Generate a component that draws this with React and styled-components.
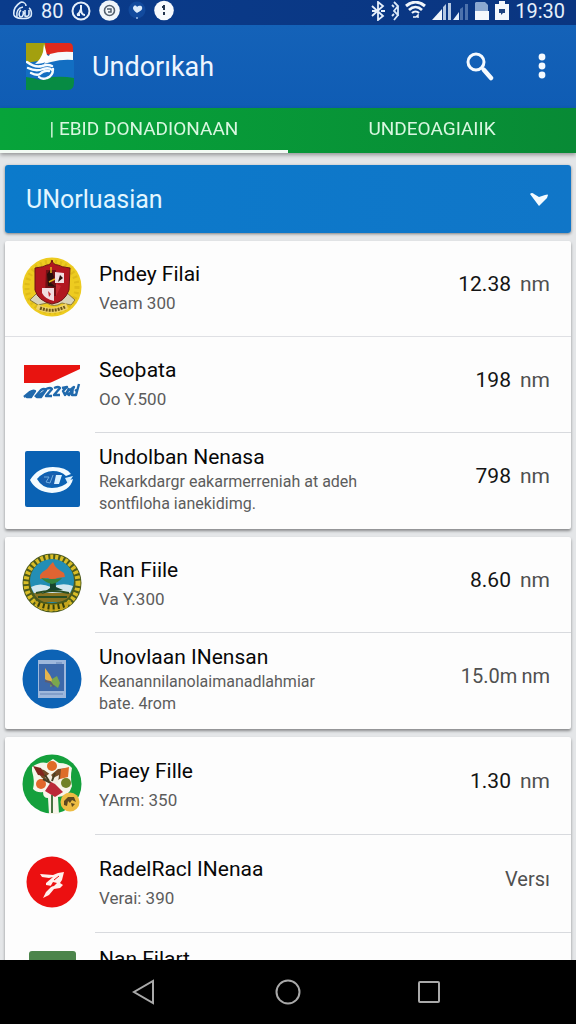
import React from "react";
import styled, { createGlobalStyle } from "styled-components";

const GlobalStyle = createGlobalStyle`
  *, *::before, *::after { box-sizing: border-box; }
  body { margin: 0; background: #e4e6e8; font-family: Roboto, "Noto Sans", sans-serif; }
  button, select { font: inherit; color: inherit; border: 0; margin: 0; padding: 0; background: none; }
`;

const Screen = styled.div`
  display: flex;
  flex-direction: column;
  height: 100vh;
  overflow: hidden;
`;

const StatusBar = styled.div`
  display: flex;
  flex: none;
  align-items: center;
  justify-content: space-between;
  height: 25px;
  padding: 0 11px 4px 12px;
  background: linear-gradient(90deg, #0a3c8c, #0a3580);
  color: #e6f0fb;
  font-size: 20px;
  line-height: 20px;
`;

const StatusGroup = styled.div`
  display: flex;
  align-items: center;
  gap: ${(p) => p.$gap}px;
  svg { display: block; }
`;

const AppBar = styled.header`
  display: flex;
  flex: none;
  align-items: center;
  height: 83px;
  padding: 0 24px 0 26px;
  background: linear-gradient(#1462b8, #0f5cb4);
  color: #eef6ff;
`;

const AppTitle = styled.h1`
  flex: 1;
  margin: 0 0 0 18px;
  font-size: 27px;
  font-weight: 400;
  line-height: 36px;
`;

const AppActions = styled.div`
  display: flex;
  gap: 28px;
`;

const IconButton = styled.button`
  display: flex;
  align-items: center;
  justify-content: center;
  width: ${(p) => p.$width}px;
  height: 48px;
  cursor: pointer;
`;

const Tabs = styled.div`
  position: relative;
  z-index: 1;
  display: flex;
  flex: none;
  height: 45px;
  background: linear-gradient(90deg, #07a43a, #088a35);
  box-shadow: 0 2px 4px rgba(0, 0, 0, 0.35);
`;

const Tab = styled.button`
  flex: 1;
  border-bottom: 3px solid ${(p) => (p["aria-selected"] ? "#f2faf4" : "transparent")};
  color: #d9f7e0;
  font-size: 19px;
  line-height: 24px;
  cursor: pointer;
`;

const Content = styled.main`
  display: flex;
  flex: 1;
  flex-direction: column;
  gap: 8px;
  min-height: 0;
  padding: 12px 5px 0;
  overflow-y: auto;
  scrollbar-width: none;
  background: #e4e6e8;
`;

const Picker = styled.div`
  position: relative;
  flex: none;
  height: 68px;
  border-radius: 3px;
  background: linear-gradient(90deg, #0b7acb, #1076c8);
  box-shadow: 0 1px 3px rgba(0, 0, 0, 0.45);
  color: #e2f6ff;

  select {
    width: 100%;
    height: 100%;
    padding: 0 60px 0 21px;
    appearance: none;
    font-size: 25px;
    cursor: pointer;
  }
  option { color: #111; }
  svg {
    position: absolute;
    top: 26px;
    right: 22px;
    pointer-events: none;
  }
`;

const Card = styled.ul`
  flex: none;
  margin: 0;
  padding: 0;
  list-style: none;
  border-radius: 2px;
  background: #fdfdfd;
  box-shadow: 0 2px 3px rgba(0, 0, 0, 0.4);
`;

const Row = styled.li`
  display: flex;
  min-height: ${(p) => (p.$tall ? 98 : 96)}px;
  border-bottom: ${(p) => (p.$wideLine ? "1px solid #dfe0e4" : "0")};
`;

const LogoCell = styled.div`
  display: flex;
  flex: none;
  align-items: ${(p) => (p.$top ? "flex-start" : "center")};
  justify-content: center;
  width: 90px;
  padding: ${(p) => (p.$top ? "18px 0 0 4px" : "0 0 4px 4px")};
  svg { display: block; }
`;

const RowBody = styled.div`
  display: flex;
  flex: 1;
  align-items: ${(p) => (p.$top ? "flex-start" : "center")};
  justify-content: space-between;
  min-width: 0;
  padding: ${(p) => (p.$top ? "12px 21px 0 4px" : "0 21px 4px 4px")};
  border-bottom: ${(p) => (p.$line ? "1px solid #d8dade" : "0")};
`;

const RowTitle = styled.h2`
  margin: 0;
  color: #080808;
  font-size: 21px;
  font-weight: 400;
  line-height: 28px;
`;

const RowNote = styled.p`
  margin: ${(p) => (p.$long ? 0 : 4)}px 0 0;
  color: #5c5c5c;
  font-size: ${(p) => (p.$long ? 16 : 17)}px;
  line-height: 22px;
  white-space: pre-line;
`;

const Amount = styled.div`
  display: flex;
  flex: none;
  gap: ${(p) => (p.$tight ? 4 : 9)}px;
  padding-bottom: 6px;
  color: ${(p) => (p.$muted ? "#505050" : "#141414")};
  font-size: ${(p) => (p.$muted ? 20 : 21)}px;
  line-height: 28px;
`;

const Unit = styled.span`
  color: #505050;
`;

const NavBar = styled.nav`
  display: flex;
  flex: none;
  align-items: center;
  justify-content: center;
  gap: 93px;
  height: 64px;
  background: #000;
  svg { display: block; }
`;

/* Status bar drawings */

const FlameIcon = () => (
  <svg width="21" height="20" viewBox="0 0 21 20" fill="none" stroke="#dcebfa" strokeWidth="1.6">
    <path d="M9 1C3 5 1 9 2 14c1 4 14 5 17 1 1-3 0-7-2-8M9 1c3 0 5 2 5 4" />
    <path d="M5 16c-1-5 1-9 6-10M9 9c-3 2-2 7 0 7s3-4 2-6M13 9v6c2 1 4 0 4-2V9" />
  </svg>
);

const RingIcon = () => (
  <svg width="20" height="20" viewBox="0 0 20 20" fill="none" stroke="#e6f0fb">
    <circle cx="10" cy="10" r="8.5" strokeWidth="2" />
    <path d="M10 4v7M6 14c2-1 3-3 4-6 0 4 1 6 4 6M6 14h3" strokeWidth="2" />
  </svg>
);

const DiscIcon = () => (
  <svg width="21" height="21" viewBox="0 0 21 21">
    <circle cx="10.500" cy="10.500" r="10.300" fill="#f1f6fb" />
    <circle cx="10.500" cy="10.500" r="5" fill="none" stroke="#53606f" strokeWidth="1.600" />
    <path d="M8 9h4v3H9" fill="none" stroke="#53606f" strokeWidth="1.500" />
  </svg>
);

const HeartIcon = () => (
  <svg width="18" height="20" viewBox="0 0 18 20">
    <circle cx="9" cy="9" r="8.500" fill="#124a9d" />
    <path d="M9 12C5 9 4 7 6 5c1-1 3 0 3 1 1-1 4-2 5 0 1 3-2 4-5 6z" fill="#dcebfa" />
    <circle cx="9" cy="17" r="1" fill="#9fbde3" />
  </svg>
);

const AlertDiscIcon = () => (
  <svg width="20" height="21" viewBox="0 0 20 21">
    <circle cx="10" cy="10.500" r="9.800" fill="#f7fafd" />
    <path d="M10 5v5M10 12v3M8 7h2" stroke="#23354f" strokeWidth="2" />
  </svg>
);

const BluetoothIcon = () => (
  <svg width="15" height="20" viewBox="0 0 15 20" fill="none" stroke="#e6f0fb" strokeWidth="1.800">
    <path d="M1 5l11 10-5 4V1l5 4L1 15M1 10h4M10 10h4" />
  </svg>
);

const LinkIcon = () => (
  <svg width="9" height="20" viewBox="0 0 9 20" fill="none" stroke="#dcebfa" strokeWidth="1.800">
    <path d="M3 1l4 4-4 5 4 4-4 5M7 5v10M1 4l2 2M1 15l2-2" />
  </svg>
);

const WifiIcon = () => (
  <svg width="21" height="20" viewBox="0 0 21 20" fill="none" stroke="#f1f6fb">
    <path d="M1 5c6-5 13-5 19 0" strokeWidth="3" />
    <path d="M4 9c4-4 9-4 13 0" strokeWidth="2.600" />
    <path d="M7 12c2-2 5-2 7 0" strokeWidth="2.200" />
    <path d="M8 16h3l2-2v3" strokeWidth="1.500" />
  </svg>
);

const SignalIcons = () => (
  <svg width="38" height="20" viewBox="0 0 38 20">
    <path d="M1 19L11 8v11z" fill="#f1f6fb" />
    <path d="M12 19V6l3-3v16zM17 19V2h3v17z" fill="#b4c8e2" />
    <path d="M22 19l6-8v8z" fill="#e6f0fb" />
    <path d="M29 19V8l3-2v13zM34 19V3h3v16z" fill="#4d72ac" />
  </svg>
);

const CardIcon = () => (
  <svg width="15" height="20" viewBox="0 0 15 20">
    <path d="M2 1h9l3 3v7H1V2z" fill="#8ba8d0" />
    <path d="M1 10h14v9H1z" fill="#f4f8fc" />
  </svg>
);

const BatteryIcon = () => (
  <svg width="16" height="20" viewBox="0 0 16 20">
    <path d="M5 0h6v3h4v16H1V3h4z" fill="#f4f8fc" />
    <path d="M5 8h6v4H9l-2 2v-2H5z" fill="#1e437f" />
  </svg>
);

/* App bar drawings */

const BrandLogo = () => (
  <svg width="48" height="49" viewBox="0 0 48 49" role="img" aria-label="Logo">
    <path d="M0 1h20v19L0 23z" fill="#a3a00e" />
    <path d="M19 1h24q4 0 4 5v5q-12-1-22 2l-5-1z" fill="#e02a1c" />
    <path d="M18 18h30v18H0V21z" fill="#126ec2" />
    <path d="M24 12q10-3 23-2v8q-11-1-22 2l-7 2z" fill="#f6fafa" />
    <path d="M18 2l3 11 4 2-3 4q-5 3-13 3 6-5 8-12z" fill="#fff" />
    <path d="M0 35q8 1 14 3 6 0 12-3 12-1 22 1v4q0 8-6 8H0z" fill="#078b43" />
    <g fill="none" stroke="#f5fbff" strokeWidth="2.4" strokeLinecap="round">
      <path d="M1 20q8 6 15 4 6-2 10 0" />
      <path d="M2 26q8 4 15 1 6-2 9 1" />
      <path d="M5 31q6 3 9 1 4-4 9-3" />
      <path d="M27 27q0 7-6 9-5 2-8-1" />
    </g>
  </svg>
);

const SearchIcon = () => (
  <svg width="28" height="30" viewBox="0 0 28 30" fill="none" stroke="#f5faff">
    <circle cx="10" cy="10" r="8" strokeWidth="3" />
    <path d="M16 16l3 3" strokeWidth="3" />
    <path d="M18 18l7 8" strokeWidth="4.500" strokeLinecap="round" />
  </svg>
);

const MoreIcon = () => (
  <svg width="8" height="28" viewBox="0 0 8 28" fill="#f5faff">
    <circle cx="4" cy="4" r="3.400" />
    <circle cx="4" cy="13" r="3.400" />
    <circle cx="4" cy="22" r="3.400" />
  </svg>
);

const ArrowIcon = () => (
  <svg width="20" height="16" viewBox="0 0 20 16" aria-hidden="true">
    <path d="M1 3q2-2 4 0l5 3 6-2q3-1 3 0l-1 3-8 8z" fill="#f3fbff" />
  </svg>
);

/* Row logos */

const ShieldLogo = () => (
  <svg width="60" height="60" viewBox="0 0 60 60">
    <circle cx="30" cy="30" r="29.500" fill="#edcb20" />
    <circle cx="30" cy="30" r="25" fill="none" stroke="#dfbb18" strokeWidth="5" strokeDasharray="2 3" />
    <path d="M8 43l8-8 8 10 12 0 8-10 9 8-4 5-9-2q-8 5-15 0l-9 2z" fill="#d9d4b8" stroke="#8b7a3a" strokeWidth="1" />
    <path d="M13 11q9-1 12-3 4 0 5-5 1 5 6 5 3 2 12 3l-1 22q-4 12-17 14-14-3-17-14z" fill="#b11720" stroke="#6d1514" strokeWidth="1" />
    <path d="M24 13h10v26H23z" fill="#701013" />
    <path d="M33 15l9 1v10h-9zM20 31h12v13q-9-2-12-8z" fill="#f1dde0" />
    <path d="M25 17l4-5 3 8-3 6 5 4-8-1zM38 18l3 3-5 4z" fill="#28100b" />
    <path d="M26 34l3 3-2 3zM34 27l5 2-5 10z" fill="#c52b32" />
    <path d="M29 10v6M27 25l6-3" stroke="#e4b11d" strokeWidth="1.500" />
    <path d="M16 47q14 8 28-1l2 6q-17 8-32 0z" fill="#efd36b" />
    <path d="M18 51q12 5 25-1" fill="none" stroke="#6b5618" strokeWidth="3" strokeDasharray="2 1" />
  </svg>
);

const WaveLogo = () => (
  <svg width="58" height="38" viewBox="0 0 58 38">
    <path d="M1 1h56v4L29 18q-2 1-4 1H1z" fill="#e81410" />
    <g fill="none" stroke="#2069ac" strokeWidth="2.400" strokeLinejoin="round">
      <path d="M1 33l6-5q3-2 5-1l-4 6H4l7-5M12 33l6-7q3-2 5 0l-5 7h-4l8-6M23 25q5-2 6 0l-6 7h6M31 24q5-2 6 0l-6 7h6" />
      <path d="M39 24l5-1-4 4 2 4 4-6M46 24q-3 6 0 7l5-8-4 3 3 3M50 23l-1 8h4l3-11M52 27l3-2" />
    </g>
  </svg>
);

const EyeLogo = () => (
  <svg width="55" height="56" viewBox="0 0 55 56">
    <rect width="55" height="56" rx="2" fill="#0a62b4" />
    <path d="M5 29q8-13 23-13 13 0 18 7l-5 2q-5-5-13-5-9 0-16 8 5 9 15 9 11 0 18-8l3-1q-3 13-21 14-16-1-22-13z" fill="#f3fbff" />
    <path d="M16 26q6-5 18-4l-2 12H19q-5-2-3-8z" fill="#175fae" />
    <path d="M19 26h5l-3 5 4 1M28 24l-3 8" fill="none" stroke="#6faee0" strokeWidth="1" />
    <path d="M31 24h6l-3 9h-5z" fill="#d8f0ff" />
    <path d="M40 27l8-2-5 8z" fill="#d8f0ff" />
  </svg>
);

const TreeLogo = () => (
  <svg width="60" height="60" viewBox="0 0 60 60">
    <circle cx="30" cy="30" r="29.500" fill="#4c5a1c" />
    <circle cx="30" cy="30" r="26" fill="none" stroke="#d9bd28" strokeWidth="5" strokeDasharray="3 2" />
    <circle cx="30" cy="28" r="22" fill="#238eb5" />
    <path d="M9 34q9-5 20 0 12-5 22-1l-3 7H12z" fill="#d4e7ef" />
    <path d="M12 40h37q-3 8-13 9H22q-8-3-10-9z" fill="#8b7421" />
    <path d="M28 21h5l1 13 7 3-10 1-12 3 9-6z" fill="#17452c" />
    <path d="M18 22q3-4 7-6l3-4 3-3 2 4q2 3 9 7l1 4-8 1-4 3-5-3-8 1z" fill="#df6432" />
    <path d="M19 25q11 2 21 0-4 5-10 6-6-1-11-6z" fill="#33843d" />
    <path d="M14 40q16-4 33 0M16 44h29" fill="none" stroke="#294d23" strokeWidth="2" />
    <path d="M12 47q18 9 37 0l-4 8q-15 6-29 0z" fill="#c5a51d" />
    <path d="M16 51q14 6 29 0" fill="none" stroke="#36400c" strokeWidth="5" strokeDasharray="2 3" />
  </svg>
);

const PhotoLogo = () => (
  <svg width="60" height="60" viewBox="0 0 60 60">
    <circle cx="30" cy="30" r="29.500" fill="#0d63b5" />
    <rect x="16" y="11" width="28" height="38" fill="#9eb8dc" />
    <rect x="17" y="15" width="25" height="27" fill="#3d69aa" />
    <path d="M18 45h23M34 14h6" stroke="#6686b8" strokeWidth="1" />
    <path d="M23 19l5 7 3 6-3 2-5-4z" fill="#e4b44d" />
    <path d="M30 30l5-3 3 7-2 5-4-3-4 2z" fill="#7ba64d" />
    <path d="M23 32l5 1 4 5" fill="none" stroke="#5c5d73" strokeWidth="2" />
  </svg>
);

const FruitLogo = () => (
  <svg width="60" height="62" viewBox="0 0 60 62">
    <circle cx="30" cy="31" r="29.500" fill="#14a03c" />
    <path d="M10 14q8-6 15-4l6-4 6 4q9 0 13 5-2 9 0 18-3 11-14 11l1 17h-10l-1-16q-5 0-5-6-6 1-10-3 2-8-1-18z" fill="#f7f5ea" />
    <path d="M12 14l10 3 7 5 7-6 10-1-4 8-10 7-12-5z" fill="#744a26" />
    <circle cx="30" cy="13" r="5" fill="#df6b24" />
    <path d="M11 13l8 2 4 8-7-1z" fill="#82251d" />
    <path d="M39 16l8-2-1 10-8 2z" fill="#de6d29" />
    <circle cx="19" cy="31" r="5" fill="#e1672a" />
    <circle cx="44" cy="30" r="5" fill="#718126" />
    <path d="M23 24l5-4 3 5 6-3-1 8-7 3z" fill="#f4eee2" />
    <path d="M23 22l4 6M33 20l-3 8M21 26l8 4" stroke="#463e23" strokeWidth="2" />
    <path d="M23 38l6-9 4 2 8 8-8 5z" fill="#bb2938" />
    <path d="M30 42v18" stroke="#497442" strokeWidth="2" />
    <circle cx="48" cy="49" r="9.500" fill="#edbc43" />
    <path d="M42 48l4-4h6l2 5-4-2-2 3-2-2-1 5-3-1zM49 50l4 1-3 3z" fill="#5c4820" />
  </svg>
);

const RunnerLogo = () => (
  <svg width="52" height="52" viewBox="0 0 52 52">
    <circle cx="26" cy="26" r="25.500" fill="#ec1011" />
    <path d="M14 18l2 3 7 1 4-1-7 6v2l6 1-6 6-3 6 6-3 5-6 6-1 3-3-3-2 2-3 2-8-6 1-5 2z" fill="#fff0ed" />
    <path d="M27 26l4 1-3 3-4 1z" fill="#ec1011" />
    <path d="M28 24l5-4" stroke="#ec1011" strokeWidth="1" />
  </svg>
);

const GreenLogo = () => (
  <svg width="47" height="47" viewBox="0 0 47 47">
    <rect width="47" height="47" rx="3" fill="#4c854b" />
  </svg>
);

const groups = [
  [
    { logo: ShieldLogo, title: "Pndey Filai", note: "Veam 300", value: "12.38", unit: "nm", wideLine: true },
    { logo: WaveLogo, title: "Seoþata", note: "Oo Y.500", value: "198", unit: "nm" },
    {
      logo: EyeLogo,
      title: "Undolban Nenasa",
      note: "Rekarkdargr eakarmerreniah at adeh\nsontfiloha ianekidimg.",
      long: true,
      value: "798",
      unit: "nm",
    },
  ],
  [
    { logo: TreeLogo, title: "Ran Fiile", note: "Va Y.300", value: "8.60", unit: "nm" },
    {
      logo: PhotoLogo,
      title: "Unovlaan INensan",
      note: "Keanannilanolaimanadlahmiar\nbate. 4rom",
      long: true,
      value: "15.0m",
      unit: "nm",
      muted: true,
    },
  ],
  [
    { logo: FruitLogo, title: "Piaey Fille", note: "YArm: 350", value: "1.30", unit: "nm", tall: true },
    { logo: RunnerLogo, title: "RadelRacl INenaa", note: "Verai: 390", value: "Versı", muted: true, tall: true },
    { logo: GreenLogo, title: "Nan Filart", top: true },
  ],
];

const ListRow = ({ item, last }) => {
  const Logo = item.logo;
  return (
    <Row $tall={item.tall} $wideLine={item.wideLine}>
      <LogoCell $top={item.top}>
        <Logo />
      </LogoCell>
      <RowBody $line={!last && !item.wideLine} $top={item.top}>
        <div>
          <RowTitle>{item.title}</RowTitle>
          {item.note && <RowNote $long={item.long}>{item.note}</RowNote>}
        </div>
        {item.value && (
          <Amount $muted={item.muted} $tight={item.muted}>
            <span>{item.value}</span>
            {item.unit && <Unit>{item.unit}</Unit>}
          </Amount>
        )}
      </RowBody>
    </Row>
  );
};

export default function App() {
  return (
    <Screen>
      <GlobalStyle />
      <StatusBar>
        <StatusGroup $gap={8}>
          <FlameIcon />
          <span>80</span>
          <RingIcon />
          <DiscIcon />
          <HeartIcon />
          <AlertDiscIcon />
        </StatusGroup>
        <StatusGroup $gap={5}>
          <BluetoothIcon />
          <LinkIcon />
          <WifiIcon />
          <SignalIcons />
          <CardIcon />
          <BatteryIcon />
          <span>19:30</span>
        </StatusGroup>
      </StatusBar>
      <AppBar>
        <BrandLogo />
        <AppTitle>Undorıkah</AppTitle>
        <AppActions>
          <IconButton $width={48} aria-label="Search">
            <SearchIcon />
          </IconButton>
          <IconButton $width={20} aria-label="More options">
            <MoreIcon />
          </IconButton>
        </AppActions>
      </AppBar>
      <Tabs role="tablist">
        <Tab role="tab" aria-selected={true}>| EBID DONADIONAAN</Tab>
        <Tab role="tab" aria-selected={false}>UNDEOAGIAIIK</Tab>
      </Tabs>
      <Content>
        <Picker>
          <select aria-label="Category" defaultValue="all">
            <option value="all">UNorluasian</option>
          </select>
          <ArrowIcon />
        </Picker>
        {groups.map((items, g) => (
          <Card key={g}>
            {items.map((item, i) => (
              <ListRow key={item.title} item={item} last={i === items.length - 1} />
            ))}
          </Card>
        ))}
      </Content>
      <NavBar>
        <IconButton $width={48} aria-label="Back">
          <svg width="30" height="26" viewBox="0 0 30 26" fill="none" stroke="#a9a9a9" strokeWidth="2">
            <path d="M21 2v22L2 13z" />
          </svg>
        </IconButton>
        <IconButton $width={48} aria-label="Home">
          <svg width="26" height="26" viewBox="0 0 26 26" fill="none" stroke="#a9a9a9" strokeWidth="2">
            <circle cx="13" cy="13" r="11.500" />
          </svg>
        </IconButton>
        <IconButton $width={48} aria-label="Recent apps">
          <svg width="22" height="22" viewBox="0 0 22 22" fill="none" stroke="#a9a9a9" strokeWidth="2">
            <rect x="1" y="1" width="20" height="20" rx="1" />
          </svg>
        </IconButton>
      </NavBar>
    </Screen>
  );
}
